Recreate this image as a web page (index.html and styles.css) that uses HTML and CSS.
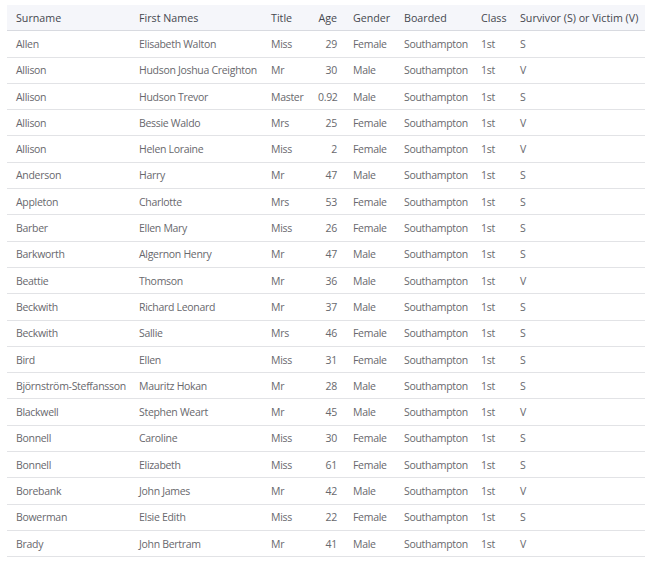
FILE: index.html
```html
<!DOCTYPE html>
<html>
<head>
<meta charset="utf-8">
<link rel="stylesheet" href="styles.css">
</head>
<body>
<table class="passengers">
<colgroup>
<col class="c-surname"><col class="c-first"><col class="c-title"><col class="c-age"><col class="c-gender"><col class="c-boarded"><col class="c-class"><col class="c-fate">
</colgroup>
<thead>
<tr><th>Surname</th><th>First Names</th><th>Title</th><th class="num">Age</th><th>Gender</th><th>Boarded</th><th>Class</th><th>Survivor (S) or Victim (V)</th></tr>
</thead>
<tbody>
<tr><td>Allen</td><td>Elisabeth Walton</td><td>Miss</td><td class="num">29</td><td>Female</td><td>Southampton</td><td>1st</td><td>S</td></tr>
<tr><td>Allison</td><td>Hudson Joshua Creighton</td><td>Mr</td><td class="num">30</td><td>Male</td><td>Southampton</td><td>1st</td><td>V</td></tr>
<tr><td>Allison</td><td>Hudson Trevor</td><td>Master</td><td class="num">0.92</td><td>Male</td><td>Southampton</td><td>1st</td><td>S</td></tr>
<tr><td>Allison</td><td>Bessie Waldo</td><td>Mrs</td><td class="num">25</td><td>Female</td><td>Southampton</td><td>1st</td><td>V</td></tr>
<tr><td>Allison</td><td>Helen Loraine</td><td>Miss</td><td class="num">2</td><td>Female</td><td>Southampton</td><td>1st</td><td>V</td></tr>
<tr><td>Anderson</td><td>Harry</td><td>Mr</td><td class="num">47</td><td>Male</td><td>Southampton</td><td>1st</td><td>S</td></tr>
<tr><td>Appleton</td><td>Charlotte</td><td>Mrs</td><td class="num">53</td><td>Female</td><td>Southampton</td><td>1st</td><td>S</td></tr>
<tr><td>Barber</td><td>Ellen Mary</td><td>Miss</td><td class="num">26</td><td>Female</td><td>Southampton</td><td>1st</td><td>S</td></tr>
<tr><td>Barkworth</td><td>Algernon Henry</td><td>Mr</td><td class="num">47</td><td>Male</td><td>Southampton</td><td>1st</td><td>S</td></tr>
<tr><td>Beattie</td><td>Thomson</td><td>Mr</td><td class="num">36</td><td>Male</td><td>Southampton</td><td>1st</td><td>V</td></tr>
<tr><td>Beckwith</td><td>Richard Leonard</td><td>Mr</td><td class="num">37</td><td>Male</td><td>Southampton</td><td>1st</td><td>S</td></tr>
<tr><td>Beckwith</td><td>Sallie</td><td>Mrs</td><td class="num">46</td><td>Female</td><td>Southampton</td><td>1st</td><td>S</td></tr>
<tr><td>Bird</td><td>Ellen</td><td>Miss</td><td class="num">31</td><td>Female</td><td>Southampton</td><td>1st</td><td>S</td></tr>
<tr><td>Björnström-Steffansson</td><td>Mauritz Hokan</td><td>Mr</td><td class="num">28</td><td>Male</td><td>Southampton</td><td>1st</td><td>S</td></tr>
<tr><td>Blackwell</td><td>Stephen Weart</td><td>Mr</td><td class="num">45</td><td>Male</td><td>Southampton</td><td>1st</td><td>V</td></tr>
<tr><td>Bonnell</td><td>Caroline</td><td>Miss</td><td class="num">30</td><td>Female</td><td>Southampton</td><td>1st</td><td>S</td></tr>
<tr><td>Bonnell</td><td>Elizabeth</td><td>Miss</td><td class="num">61</td><td>Female</td><td>Southampton</td><td>1st</td><td>S</td></tr>
<tr><td>Borebank</td><td>John James</td><td>Mr</td><td class="num">42</td><td>Male</td><td>Southampton</td><td>1st</td><td>V</td></tr>
<tr><td>Bowerman</td><td>Elsie Edith</td><td>Miss</td><td class="num">22</td><td>Female</td><td>Southampton</td><td>1st</td><td>S</td></tr>
<tr><td>Brady</td><td>John Bertram</td><td>Mr</td><td class="num">41</td><td>Male</td><td>Southampton</td><td>1st</td><td>V</td></tr>
</tbody>
</table>
</body>
</html>
```
FILE: styles.css
```css
html, body {
  margin: 0;
  background: #ffffff;
}
body {
  padding: 5px 2px 0 7px;
  font-family: "Open Sans", "Noto Sans", sans-serif;
  font-size: 10.5px;
}
.passengers {
  width: 638px;
  table-layout: fixed;
  border-collapse: collapse;
}
.c-surname { width: 123px; }
.c-first { width: 132px; }
.c-title { width: 47px; }
.c-age { width: 35px; }
.c-gender { width: 51px; }
.c-boarded { width: 77px; }
.c-class { width: 39px; }
.c-fate { width: 134px; }
.passengers th,
.passengers td {
  padding: 0 7px 0 9px;
  height: 25.3px;
  text-align: left;
  white-space: nowrap;
  border-bottom: 1px solid #e2e3e6;
  vertical-align: middle;
}
.passengers th {
  background: #f5f6fa;
  color: #45484f;
  font-weight: 400;
  font-size: 10.7px;
  border-bottom: 1px solid #d8dae0;
}
.passengers td {
  color: #68686d;
  letter-spacing: -0.3px;
}
.passengers .num {
  text-align: right;
}
```
